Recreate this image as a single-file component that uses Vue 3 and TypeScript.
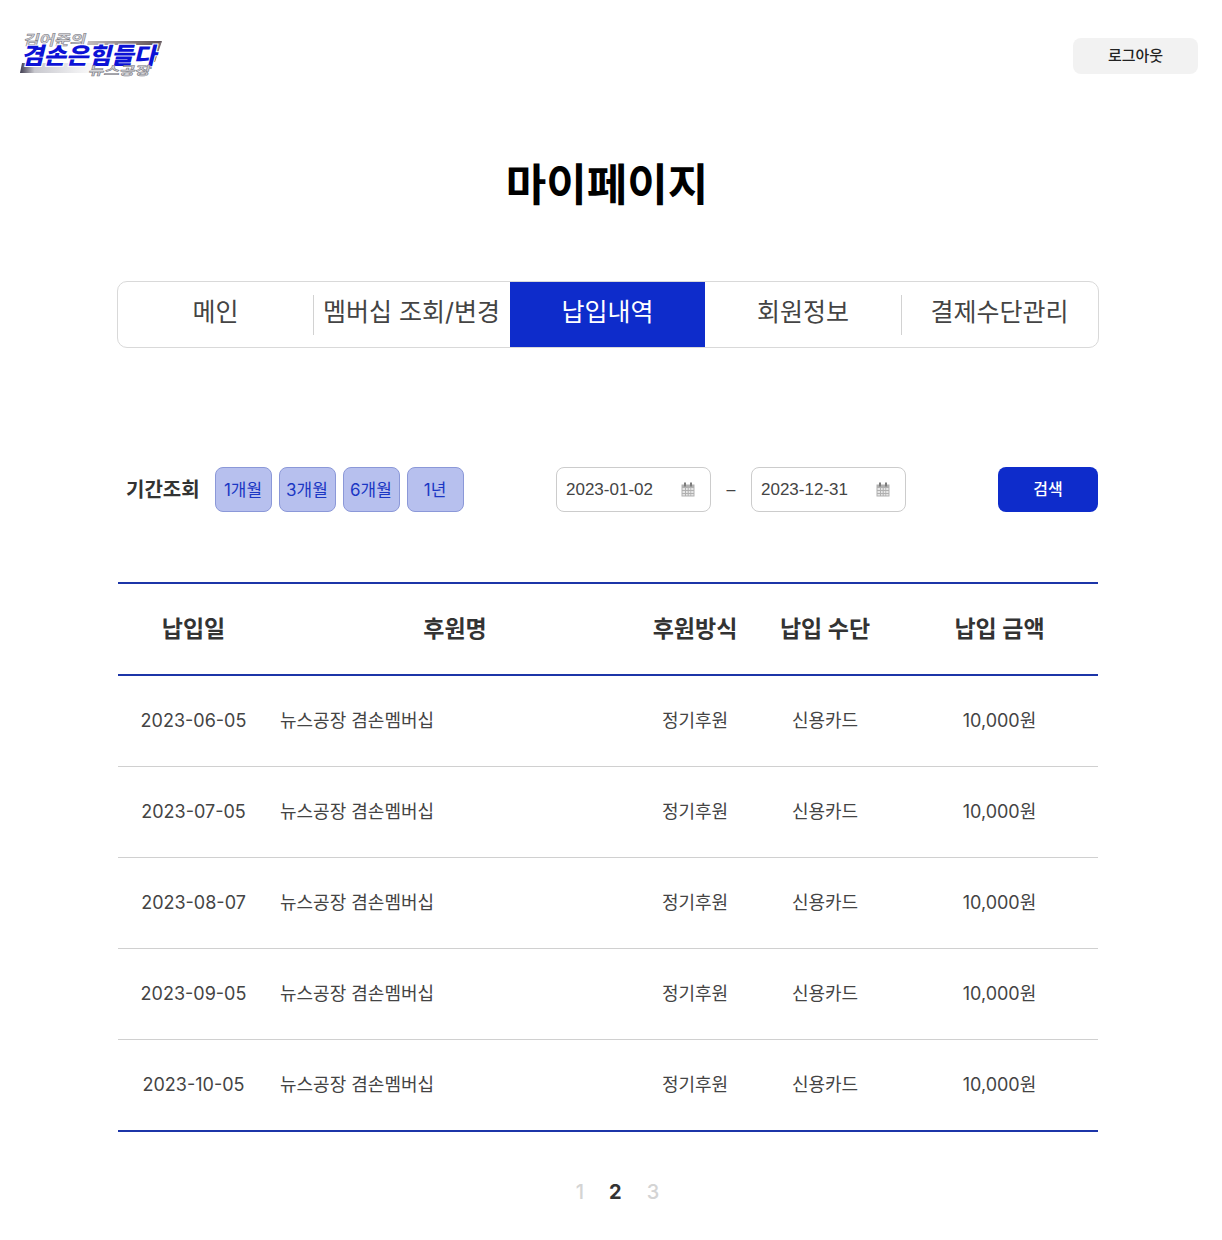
<script setup lang="ts">
const tabs = ['메인', '멤버십 조회/변경', '납입내역', '회원정보', '결제수단관리']
const periods = ['1개월', '3개월', '6개월', '1년']
const dates = ['2023-01-02', '2023-12-31']
const rows = ['2023-06-05', '2023-07-05', '2023-08-07', '2023-09-05', '2023-10-05']
const pages = [1, 2, 3]
</script>

<template>
  <div class="page">
    <header class="top">
      <svg class="logo" width="150" height="56" viewBox="0 0 150 56">
        <defs>
          <linearGradient id="bar" x1="0" y1="0" x2="1" y2="0">
            <stop offset="0" stop-color="#c4bfbf" />
            <stop offset="0.6" stop-color="#85797a" />
            <stop offset="1" stop-color="#5b5056" />
          </linearGradient>
          <linearGradient id="low" x1="0" y1="0" x2="1" y2="0">
            <stop offset="0" stop-color="#3f3c50" />
            <stop offset="0.06" stop-color="#6d6a78" />
            <stop offset="0.18" stop-color="#c8c8ce" />
            <stop offset="0.7" stop-color="#eeeef0" />
            <stop offset="1" stop-color="#ffffff" />
          </linearGradient>
        </defs>
        <polygon points="71,16 145,16 143,20 70,20" fill="url(#bar)" />
        <polygon points="142,18 145,16 138,37 135,37" fill="#7a6f74" />
        <polygon points="5,38 84,38 83,48 3,48" fill="url(#low)" />
        <g transform="translate(6 20) skewX(-14)">
          <text class="logo-small" textLength="62" lengthAdjust="spacingAndGlyphs">김어준의</text>
        </g>
        <g transform="translate(4 39) skewX(-14)">
          <text class="logo-main" textLength="135" lengthAdjust="spacingAndGlyphs">겸손은힘들다</text>
        </g>
        <g transform="translate(71 50) skewX(-14)">
          <text class="logo-tail" textLength="62" lengthAdjust="spacingAndGlyphs">뉴스공장</text>
        </g>
      </svg>
      <button class="logout">로그아웃</button>
    </header>

    <h1 class="title">마이페이지</h1>

    <nav class="tabs">
      <div
        v-for="(tab, i) in tabs"
        :key="tab"
        class="tab"
        :class="{ active: i === 2, divided: i === 1 || i === 4 }"
      >{{ tab }}</div>
    </nav>

    <section class="filter">
      <strong class="filter-label">기간조회</strong>
      <div class="periods">
        <button v-for="p in periods" :key="p" class="period">{{ p }}</button>
      </div>
      <div class="range">
        <template v-for="(d, i) in dates" :key="d">
          <span v-if="i === 1" class="dash">–</span>
          <div class="date">
            <span>{{ d }}</span>
            <svg width="14" height="15" viewBox="0 0 14 15">
              <path d="M0.5 2.5h13v12H0.5z" fill="#b0b0b0" />
              <path d="M3 0.5h2v4H3zM9 0.5h2v4H9z" fill="#7c7c7c" />
              <path d="M1.5 6h2.5v2H1.5zM5 6h1.7v2H5zM7.7 6h1.7v2H7.7zM10.2 6h2.3v2h-2.3zM1.5 9h2.5v2H1.5zM5 9h1.7v2H5zM7.7 9h1.7v2H7.7zM10.2 9h2.3v2h-2.3zM1.5 12h2.5v1.6H1.5zM5 12h1.7v1.6H5zM7.7 12h1.7v1.6H7.7zM10.2 12h2.3v1.6h-2.3z" fill="#e6e6e6" />
            </svg>
          </div>
        </template>
      </div>
      <button class="search">검색</button>
    </section>

    <table class="list">
      <colgroup>
        <col class="c1" /><col class="c2" /><col class="c3" /><col class="c4" /><col class="c5" />
      </colgroup>
      <thead>
        <tr>
          <th>납입일</th><th>후원명</th><th>후원방식</th><th>납입 수단</th><th>납입 금액</th>
        </tr>
      </thead>
      <tbody>
        <tr v-for="r in rows" :key="r">
          <td>{{ r }}</td>
          <td class="name">뉴스공장 겸손멤버십</td>
          <td>정기후원</td>
          <td>신용카드</td>
          <td>10,000원</td>
        </tr>
      </tbody>
    </table>

    <div class="pager">
      <span v-for="n in pages" :key="n" class="num" :class="{ current: n === 2 }">{{ n }}</span>
    </div>
  </div>
</template>

<style>
body {
  background: #fff;
}
</style>

<style scoped>
.page {
  width: 1222px;
  height: 1240px;
  overflow: hidden;
  box-sizing: border-box;
  font-family: Inter, "Noto Sans CJK KR", sans-serif;
  color: #333;
}
.top {
  display: flex;
  justify-content: space-between;
  align-items: flex-start;
  padding: 25px 24px 0 17px;
  height: 76px;
  box-sizing: border-box;
}
.logo {
  display: block;
}
.logo-small,
.logo-tail {
  font: 700 14px "Noto Sans CJK KR", sans-serif;
  fill: #d2d2d6;
  stroke: #77777f;
  stroke-width: 0.5px;
}
.logo-tail {
  font-size: 12px;
}
.logo-main {
  font: 900 23px "Noto Sans CJK KR", sans-serif;
  fill: #0c12d6;
  stroke: #fff;
  stroke-width: 2px;
  paint-order: stroke;
}
.logout {
  width: 125px;
  height: 36px;
  margin-top: 13px;
  padding: 0 0 4px;
  border: 0;
  border-radius: 8px;
  background: #f2f2f2;
  color: #222;
  font: 500 15px Inter, "Noto Sans CJK KR", sans-serif;
}
.title {
  margin: 0;
  padding: 78px 8px 0 0;
  height: 129px;
  box-sizing: border-box;
  display: flex;
  justify-content: center;
  font-size: 44px;
  line-height: 62px;
  font-weight: 700;
  color: #000;
}
.tabs {
  display: flex;
  width: 982px;
  height: 67px;
  margin: 76px 0 0 117px;
  box-sizing: border-box;
  border: 1px solid #d9d9d9;
  border-radius: 10px;
  overflow: hidden;
}
.tab {
  display: flex;
  align-items: center;
  justify-content: center;
  position: relative;
  font-size: 25px;
  color: #444;
  white-space: nowrap;
  padding-bottom: 9px;
  box-sizing: border-box;
}
.tab:nth-child(1) { width: 195px; }
.tab:nth-child(2) { width: 197px; }
.tab:nth-child(3) { width: 195px; }
.tab:nth-child(4) { width: 196px; }
.tab:nth-child(5) { width: 197px; }
.tab.divided::before {
  content: "";
  position: absolute;
  left: 0;
  top: 13px;
  height: 40px;
  width: 1px;
  background: #d2d2d2;
}
.tab.active {
  background: #0e2ccb;
  color: #fff;
}
.filter {
  display: flex;
  align-items: center;
  width: 980px;
  height: 45px;
  margin: 119px 0 0 118px;
}
.filter-label {
  width: 97px;
  padding: 0 0 2px 8px;
  box-sizing: border-box;
  font-size: 20px;
  font-weight: 700;
  color: #333;
  white-space: nowrap;
}
.periods {
  display: flex;
  gap: 7px;
}
.period {
  width: 57px;
  height: 45px;
  padding: 0 1px 2px 0;
  box-sizing: border-box;
  border: 1px solid #8b98d8;
  border-radius: 8px;
  background: #b7c0ee;
  color: #1b37c4;
  font: 400 17px Inter, "Noto Sans CJK KR", sans-serif;
}
.range {
  display: flex;
  align-items: center;
  margin-left: 92px;
}
.date {
  width: 155px;
  height: 45px;
  padding: 0 15px 0 9px;
  box-sizing: border-box;
  display: flex;
  align-items: center;
  justify-content: space-between;
  border: 1px solid #ccc;
  border-radius: 8px;
  font: 400 17px "Liberation Sans", sans-serif;
  color: #444;
}
.dash {
  width: 40px;
  text-align: center;
  font: 400 16px "Liberation Sans", sans-serif;
  color: #444;
}
.search {
  width: 100px;
  height: 45px;
  margin-left: auto;
  padding: 0 0 3px;
  border: 0;
  border-radius: 8px;
  background: #0e2ccb;
  color: #fff;
  font: 500 16px Inter, "Noto Sans CJK KR", sans-serif;
}
.list {
  width: 980px;
  margin: 70px 0 0 118px;
  border-collapse: collapse;
  table-layout: fixed;
  border-top: 2px solid #1c35a8;
  border-bottom: 2px solid #1c35a8;
}
.c1 { width: 151px; }
.c2 { width: 372px; }
.c3 { width: 108px; }
.c4 { width: 152px; }
.c5 { width: 197px; }
th {
  height: 92px;
  box-sizing: border-box;
  padding: 0 0 5px;
  border-bottom: 2px solid #1c35a8;
  font-size: 23px;
  font-weight: 700;
  color: #333;
}
td {
  height: 91px;
  box-sizing: border-box;
  padding: 0 0 4px;
  text-align: center;
  border-bottom: 1px solid #d0d0d0;
  font-size: 18px;
  color: #444;
}
td:first-child {
  padding-bottom: 1px;
}
tbody tr:last-child td {
  height: 92px;
  border-bottom: 0;
}
td.name {
  text-align: left;
  padding-left: 11px;
}
.pager {
  display: flex;
  gap: 25px;
  justify-content: center;
  margin: 47px 0 0 13px;
  font-size: 20px;
  font-weight: 500;
  line-height: 26px;
}
.num {
  color: #d4d4d4;
}
.num.current {
  color: #333;
  font-weight: 700;
}
</style>
